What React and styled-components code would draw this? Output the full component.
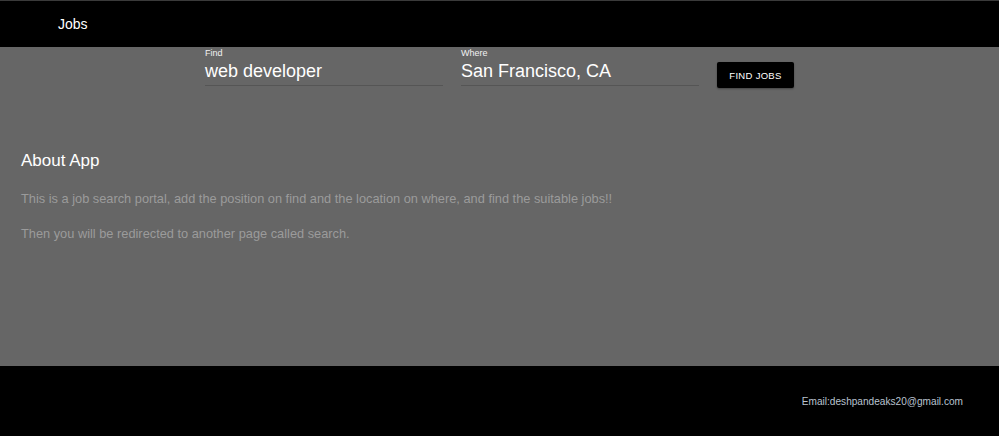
import React from "react";
import styled, { createGlobalStyle } from "styled-components";

const Global = createGlobalStyle`
  html, body { margin: 0; padding: 0; background: #666666; }
  body { font-family: "Liberation Sans", Arial, sans-serif; }
  * { box-sizing: border-box; }
`;

const Page = styled.div`
  width: 999px;
  height: 436px;
  display: flex;
  flex-direction: column;
`;

const Header = styled.header`
  height: 47px;
  background: #000;
  border-top: 1px solid #3a3a3a;
  display: flex;
  align-items: center;
  padding-left: 58px;
`;

const Brand = styled.div`
  color: #fff;
  font-size: 14px;
  line-height: 16px;
`;

const Main = styled.main`
  flex: 1;
  background: #666666;
  display: flex;
  flex-direction: column;
`;

const SearchRow = styled.form`
  display: flex;
  justify-content: center;
  align-items: flex-start;
  gap: 18px;
  margin: 0;
`;

const Field = styled.label`
  width: 238px;
  display: flex;
  flex-direction: column;
  padding-top: 1px;
  padding-bottom: 2px;
  border-bottom: 1px solid #555555;
`;

const FieldLabel = styled.span`
  font-size: 9px;
  line-height: 10px;
  color: #f2f2f2;
`;

const FieldValue = styled.span`
  font-size: 18px;
  line-height: 24px;
  color: #fff;
  margin-top: 1px;
`;

const Button = styled.button`
  margin-top: 15px;
  width: 77px;
  height: 26px;
  background: #000;
  color: #fff;
  border: none;
  border-radius: 2px;
  font-family: "Liberation Sans", Arial, sans-serif;
  font-size: 9.5px;
  letter-spacing: 0.3px;
  box-shadow: 0 1px 2px rgba(0,0,0,0.35);
  padding: 0;
`;

const About = styled.section`
  padding: 0 21px;
  margin-top: 63px;
`;

const Heading = styled.h2`
  margin: 0;
  font-weight: 400;
  font-size: 17px;
  line-height: 20px;
  color: #fff;
`;

const Text = styled.p`
  margin: ${p => p.$top}px 0 0;
  font-size: 12.8px;
  line-height: 14px;
  color: #9b9b9b;
`;

const Footer = styled.footer`
  height: 70px;
  background: #000;
  display: flex;
  justify-content: flex-end;
  align-items: center;
  padding-right: 36px;
`;

const Email = styled.span`
  font-size: 10.1px;
  color: #b9c3d0;
`;

export default function App() {
  return (
    <>
      <Global />
      <Page>
        <Header>
          <Brand>Jobs</Brand>
        </Header>
        <Main>
          <SearchRow onSubmit={e => e.preventDefault()}>
            <Field>
              <FieldLabel>Find</FieldLabel>
              <FieldValue>web developer</FieldValue>
            </Field>
            <Field>
              <FieldLabel>Where</FieldLabel>
              <FieldValue>San Francisco, CA</FieldValue>
            </Field>
            <Button type="submit">FIND JOBS</Button>
          </SearchRow>
          <About>
            <Heading>About App</Heading>
            <Text $top={21}>
              This is a job search portal, add the position on find and the location on where, and find the suitable jobs!!
            </Text>
            <Text $top={21}>Then you will be redirected to another page called search.</Text>
          </About>
        </Main>
        <Footer>
          <Email>Email:deshpandeaks20@gmail.com</Email>
        </Footer>
      </Page>
    </>
  );
}
